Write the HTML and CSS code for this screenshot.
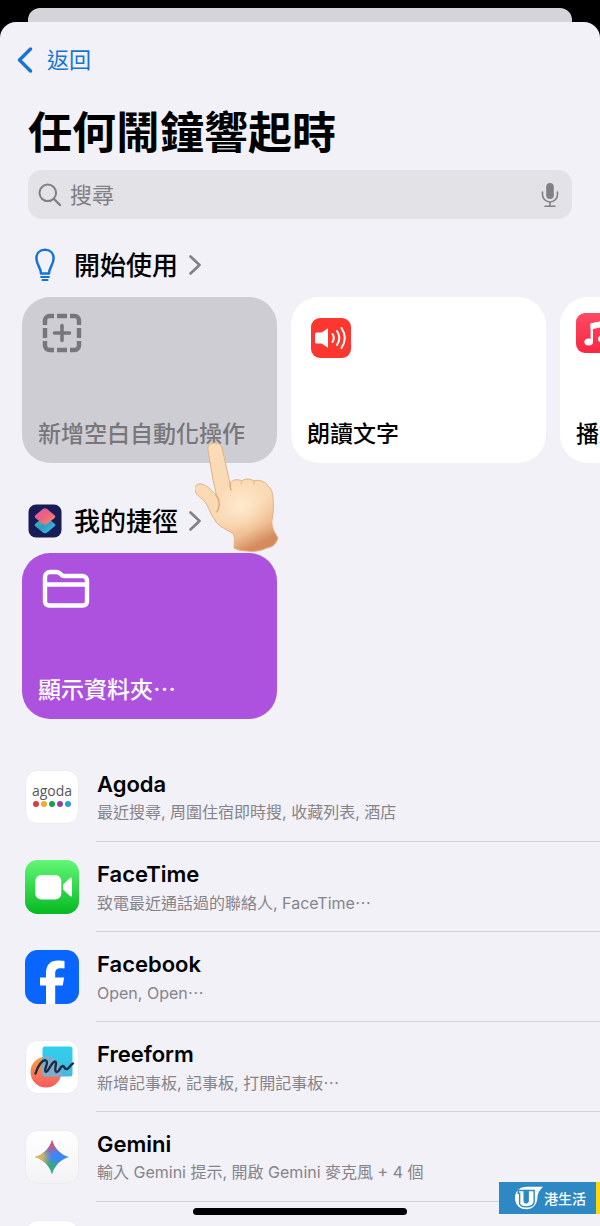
FILE: index.html
```html
<!DOCTYPE html>
<html lang="zh-Hant">
<head>
<meta charset="utf-8">
<meta name="viewport" content="width=device-width, initial-scale=1">
<title>任何鬧鐘響起時</title>
<link rel="stylesheet" href="styles.css">
</head>
<body>
<div class="screen">
  <div class="sheet-behind"></div>
  <main class="sheet">
    <nav class="nav">
      <a class="back" href="#">
        <svg class="back-icon" viewBox="0 0 16 26" aria-hidden="true"><path d="M13.500 2 2.500 13l11 11" fill="none" stroke="currentColor" stroke-width="3.400" stroke-linecap="round" stroke-linejoin="round"/></svg>
        <span class="back-label">返回</span>
      </a>
    </nav>
    <h1 class="title">任何鬧鐘響起時</h1>
    <form class="search">
      <svg class="search-icon" viewBox="0 0 24 24" aria-hidden="true"><circle cx="9.800" cy="9.800" r="8.300" fill="none" stroke="currentColor" stroke-width="2"/><path d="m16 16 6 6" stroke="currentColor" stroke-width="2.400" stroke-linecap="round"/></svg>
      <input class="search-input" type="search" placeholder="搜尋" aria-label="搜尋">
      <button class="mic" type="button" aria-label="語音輸入">
        <svg class="mic-icon" viewBox="0 0 18 26" aria-hidden="true"><rect x="5.200" y="1" width="7.600" height="16" rx="3.800" fill="currentColor"/><path d="M1.500 10v2.500a7.500 7.500 0 0 0 15 0V10M9 20v4M4 24.300h10" fill="none" stroke="currentColor" stroke-width="1.600" stroke-linecap="round"/></svg>
      </button>
    </form>

    <section class="section">
      <h2 class="section-head">
        <svg class="section-icon" viewBox="0 0 34 34" aria-hidden="true"><g fill="none" stroke="#1573d6" stroke-width="2.500" stroke-linecap="round" stroke-linejoin="round"><path d="M13 25.500c0-6-4.600-8.500-4.600-15.200 0-5.200 3.600-8.500 8.600-8.500s8.600 3.300 8.600 8.500c0 6.700-4.600 9.200-4.600 15.200z"/><path d="M13 29h8" stroke-width="1.800"/><path d="M14.500 32h5" stroke-width="2.200"/></g></svg>
        <a class="section-link" href="#"><span class="section-label">開始使用</span>
          <svg class="chevron" viewBox="0 0 12 20" aria-hidden="true"><path d="m1.500 1.500 9 8.500-9 8.500" fill="none" stroke="currentColor" stroke-width="2.600" stroke-linecap="round" stroke-linejoin="round"/></svg>
        </a>
      </h2>
      <div class="cards">
        <button class="card card-pressed" type="button">
          <svg class="glyph" viewBox="0 0 48 40" aria-hidden="true"><g fill="none" stroke="currentColor"><path stroke-width="4.400" d="M3 12V7.500A4.500 4.500 0 0 1 7.500 3H12M15 3h10M28 3h4.500A4.500 4.500 0 0 1 37 7.500V12M37 15v10M37 28v4.500A4.500 4.500 0 0 1 32.500 37H28M25 37H15M12 37H7.500A4.500 4.500 0 0 1 3 32.500V28M3 25V15"/><path stroke-width="3.600" stroke-linecap="round" d="M20 12.500v15M12.500 20h15"/></g></svg>
          <span>新增空白自動化操作</span>
        </button>
        <button class="card" type="button">
          <svg class="tile" viewBox="0 0 40 40" aria-hidden="true"><rect width="40" height="40" rx="9" fill="#fc372f"/><path d="M5.500 14.500h5L17 10.300v19.500L10.500 25.500h-5a1.500 1.500 0 0 1-1.500-1.500v-8a1.500 1.500 0 0 1 1.500-1.500z" fill="#fff"/><g fill="none" stroke="#fff" stroke-width="2" stroke-linecap="round"><path d="M21.500 16q2.600 4 0 8M26 13q4.600 7 0 14M30.500 10q6.600 10 0 20"/></g></svg>
          <span>朗讀文字</span>
        </button>
        <button class="card" type="button">
          <svg class="tile tile-music" viewBox="0 0 40 40" aria-hidden="true"><defs><linearGradient id="music" x2="0" y2="1"><stop stop-color="#fb4b62"/><stop offset="1" stop-color="#fa2743"/></linearGradient></defs><rect width="40" height="40" rx="9" fill="url(#music)"/><path d="M14.600 10.500 30.700 7v6L14.600 16.500z" fill="#fff"/><path d="M15.800 28V11.500L29.500 8.600v16" fill="none" stroke="#fff" stroke-width="2.400"/><ellipse cx="12.700" cy="29" rx="4.300" ry="3.600" fill="#fff"/><ellipse cx="26.300" cy="26" rx="4.300" ry="3.600" fill="#fff"/></svg>
          <span>播放音樂</span>
        </button>
      </div>
      <svg class="hand" viewBox="0 0 84 112" aria-hidden="true">
        <defs>
          <linearGradient id="skin" x1=".2" y1="0" x2=".6" y2="1"><stop stop-color="#fbdcb6"/><stop offset=".65" stop-color="#fad9b5"/><stop offset=".86" stop-color="#f0bf95"/><stop offset="1" stop-color="#d48c5e"/></linearGradient>
          <radialGradient id="palm" cx=".45" cy=".45" r=".55"><stop stop-color="#ffebd0"/><stop offset="1" stop-color="#ffe3c2" stop-opacity="0"/></radialGradient>
        </defs>
        <path d="M13 8C12 3 16 1 20 1c4 0 6 2 7 5L35 41C38 37 43 37 47 39C50 36 56 37 59 39C64 37 71 40 73 44C77 47 78 52 78 58C79 66 78 73 77 78C76 85 80 91 83 96C81 102 78 105 72 106C66 109 58 110 52 109C47 109 42 108 39 106C39 102 40 97 39 93C36 89 27 87 22 81C17 75 15 69 12 63C8 56 3 55 1 51C-1 47-1 43 4 42C10 41 15 47 21 53C21 48 19 43 18 38z" fill="url(#skin)" stroke="#e4b184" stroke-width="1"/>
        <ellipse cx="49" cy="66" rx="26" ry="26" fill="url(#palm)"/>
        <path d="M21 53c4 5 4 11 1 17M35 41c0 3 0 5 1 7" fill="none" stroke="#dda779" stroke-width="1.400" stroke-linecap="round"/>
        <path d="M47 39c-1 1-1 2-1 3M59 39v3" fill="none" stroke="#e4b58a" stroke-linecap="round"/>
      </svg>
    </section>

    <section class="section section-second">
      <h2 class="section-head">
        <svg class="section-icon" viewBox="0 0 34 34" aria-hidden="true"><defs><linearGradient id="scA" x2="1" y2="1"><stop stop-color="#dd59d1"/><stop offset=".45" stop-color="#ed6079"/><stop offset="1" stop-color="#ed9279"/></linearGradient><linearGradient id="scB" x2="1" y2="1"><stop stop-color="#35c4a1"/><stop offset=".5" stop-color="#2d9bc4"/><stop offset="1" stop-color="#42c6f1"/></linearGradient></defs><rect x=".5" y=".5" width="33" height="33" rx="7.500" fill="#181c56"/><path d="m14.900 13.500-7.200 5.900q-2 1.600 0 3.200l7.200 5.900q2.100 1.300 4.200 0l7.200-5.900q2-1.600 0-3.200l-7.200-5.900z" fill="url(#scB)"/><path d="m14.900 5-7.200 6q-2 1.600 0 3.200l7.200 5.900q2.100 1.300 4.200 0l7.200-5.900q2-1.600 0-3.200l-7.200-6q-2.100-1.300-4.200 0z" fill="url(#scA)"/></svg>
        <a class="section-link" href="#"><span class="section-label">我的捷徑</span>
          <svg class="chevron" viewBox="0 0 12 20" aria-hidden="true"><path d="m1.500 1.500 9 8.500-9 8.500" fill="none" stroke="currentColor" stroke-width="2.600" stroke-linecap="round" stroke-linejoin="round"/></svg>
        </a>
      </h2>
      <div class="cards">
        <button class="card card-purple" type="button">
          <svg class="glyph" viewBox="0 0 48 40" aria-hidden="true"><path d="M3 8a5 5 0 0 1 5-5h6.500q2 0 3.500 1.500l1.800 1.600Q21.200 7 23 7h17.500a4.500 4.500 0 0 1 4.500 4.500v21a4 4 0 0 1-4 4H7a4 4 0 0 1-4-4zM3 15.500h42" fill="none" stroke="currentColor" stroke-width="4.400"/></svg>
          <span>顯示資料夾<span class="dots">…</span></span>
        </button>
      </div>
    </section>

    <ul class="apps">
      <li class="app">
        <svg class="app-icon" viewBox="0 0 54 54" aria-hidden="true"><rect x=".5" y=".5" width="53" height="53" rx="12" fill="#fff" stroke="#ececf0"/><text x="27" y="26" class="agoda-word">agoda</text><circle cx="11" cy="34" r="3" fill="#d93b41"/><circle cx="19" cy="34" r="3" fill="#f3ad24"/><circle cx="27" cy="34" r="3" fill="#16a04e"/><circle cx="35" cy="34" r="3" fill="#964596"/><circle cx="43" cy="34" r="3" fill="#26a2ce"/></svg>
        <div class="app-text"><h3>Agoda</h3><p>最近搜尋, 周圍住宿即時搜, 收藏列表, 酒店</p></div>
      </li>
      <li class="app">
        <svg class="app-icon" viewBox="0 0 54 54" aria-hidden="true"><defs><linearGradient id="ft" x2="0" y2="1"><stop stop-color="#62f778"/><stop offset="1" stop-color="#06b921"/></linearGradient></defs><rect width="54" height="54" rx="12.500" fill="url(#ft)"/><rect x="10.300" y="15" width="26" height="24.500" rx="6" fill="#fff"/><path d="M38 24.500 45 18q2-1.500 2 .8v16.400q0 2.300-2 .8l-7-6.500z" fill="#fff"/></svg>
        <div class="app-text"><h3>FaceTime</h3><p>致電最近通話過的聯絡人, FaceTime<span class="dots">…</span></p></div>
      </li>
      <li class="app">
        <svg class="app-icon" viewBox="0 0 54 54" aria-hidden="true"><rect width="54" height="54" rx="12.500" fill="#0866fe"/><path d="M21 54V35.500h-6v-8h6v-3.800C21 14.500 25.200 10.500 33 10.500c2.700 0 5 .2 6.500.6V18.500c-1-.1-2.300-.2-3.700-.2-4 0-5.600 1.500-5.600 5.400v3.800h9l-1.500 8h-7.500V54z" fill="#fff"/></svg>
        <div class="app-text"><h3>Facebook</h3><p>Open, Open<span class="dots">…</span></p></div>
      </li>
      <li class="app">
        <svg class="app-icon" viewBox="0 0 54 54" aria-hidden="true"><defs><linearGradient id="ffA" x2="0" y2="1"><stop stop-color="#f7a044"/><stop offset="1" stop-color="#fb5a60"/></linearGradient><linearGradient id="ffB" x2="0" y2="1"><stop stop-color="#2ed1ed"/><stop offset="1" stop-color="#46b9e2"/></linearGradient><clipPath id="ffC"><circle cx="21" cy="32" r="15.500"/></clipPath></defs><rect x=".5" y=".5" width="53" height="53" rx="12" fill="#fff" stroke="#ececf0"/><circle cx="21" cy="32" r="15.500" fill="url(#ffA)"/><rect x="17.500" y="6.500" width="30" height="30" rx="2.500" fill="url(#ffB)"/><rect x="17.500" y="6.500" width="30" height="30" rx="2.500" fill="#84aacb" clip-path="url(#ffC)"/><path d="M10.500 33.500C13 25 18 19 21 20.500c3.500 1.500-2.500 9-.5 11 2.500 2 6-10 9.500-10 3 0-2 9.500 1.500 10.500 3 .5 3.500-6 6.500-6 2 0 1 4 4 3 2.500-.8 3-4 6-5.500" fill="none" stroke="#172f47" stroke-width="2.400" stroke-linecap="round" stroke-linejoin="round"/></svg>
        <div class="app-text"><h3>Freeform</h3><p>新增記事板, 記事板, 打開記事板<span class="dots">…</span></p></div>
      </li>
      <li class="app">
        <svg class="app-icon" viewBox="0 0 54 54" aria-hidden="true"><defs><linearGradient id="gmBg" x2="0" y2="1"><stop stop-color="#fff"/><stop offset="1" stop-color="#f3f3f5"/></linearGradient><radialGradient id="gmR" cx=".46" cy="0" r=".46"><stop stop-color="#f04450"/><stop offset=".4" stop-color="#e0506a" stop-opacity=".9"/><stop offset="1" stop-color="#b060a0" stop-opacity="0"/></radialGradient><radialGradient id="gmY" cx="0" cy=".5" r=".5"><stop stop-color="#fac02e"/><stop offset=".5" stop-color="#e5b84a" stop-opacity=".85"/><stop offset="1" stop-color="#9db070" stop-opacity="0"/></radialGradient><radialGradient id="gmG" cx=".4" cy="1" r=".52"><stop stop-color="#2eb457"/><stop offset=".5" stop-color="#37ad6e" stop-opacity=".9"/><stop offset="1" stop-color="#3c9ca0" stop-opacity="0"/></radialGradient><path id="gmS" d="M27 10c2 8 9 15 17 17-8 2-15 9-17 17-2-8-9-15-17-17 8-2 15-9 17-17z"/></defs><rect x=".5" y=".5" width="53" height="53" rx="12" fill="url(#gmBg)" stroke="#ececf0"/><use href="#gmS" fill="#3f86f5"/><use href="#gmS" fill="url(#gmG)"/><use href="#gmS" fill="url(#gmY)"/><use href="#gmS" fill="url(#gmR)"/></svg>
        <div class="app-text"><h3>Gemini</h3><p>輸入 Gemini 提示, 開啟 Gemini 麥克風 + 4 個</p></div>
      </li>
      <li class="app">
        <svg class="app-icon" viewBox="0 0 54 54" aria-hidden="true"><rect x=".5" y=".5" width="53" height="53" rx="12" fill="#fff" stroke="#ececf0"/></svg>
        <div class="app-text"><h3>Google</h3></div>
      </li>
    </ul>
  </main>
  <div class="home-indicator"></div>
  <div class="watermark">
    <svg class="watermark-logo" viewBox="0 0 32 26" aria-hidden="true"><path d="M31 1H14C6 1 1 6 1 13s5 12 12 12 11.500-5 12-12c0-5 2-8 6-12z" fill="#fff"/><path d="M4.500 5H11v11q0 2 2 2t2-2V5h6.500v11.500q0 6-8.300 6T6 16.500V8H4.500z" fill="#fff" stroke="#2e88c4" stroke-width="1.500"/><path d="M10.500 4.300h5V16q0 2.500-2.500 2.500T10.500 16z" fill="#2e88c4"/></svg>
    港生活
  </div>
</div>
</body>
</html>
```

FILE: styles.css
```css
* {
  box-sizing: border-box;
}

body {
  margin: 0;
  background: #000;
  color: #000;
  font-family: Inter, "Noto Sans CJK TC", sans-serif;
}

button,
input {
  font: inherit;
}

a {
  color: inherit;
  text-decoration: none;
}

h1,
h2,
h3,
p,
ul {
  margin: 0;
  padding: 0;
}

.screen {
  position: relative;
  display: flex;
  flex-direction: column;
  height: 100vh;
  padding-top: 8px;
  overflow: hidden;
}

.sheet-behind {
  flex: none;
  height: 14px;
  margin: 0 28px;
  border-radius: 12px 12px 0 0;
  background: #d4d4d9;
}

.sheet {
  flex: 1;
  min-height: 0;
  overflow: hidden;
  border-radius: 16px 16px 0 0;
  background: #f2f1f7;
}

.nav {
  display: flex;
  align-items: center;
  height: 76px;
  padding: 0 17px;
}

.back {
  display: flex;
  align-items: center;
  gap: 14px;
  color: #1573d6;
  font-size: 22px;
}

.back-label,
.section-label {
  padding-bottom: 4px;
}

.back-icon {
  width: 16px;
  height: 26px;
}

.title {
  padding: 2px 28px 4px;
  font-size: 44px;
  font-weight: 700;
  line-height: 66px;
}

.search {
  display: flex;
  align-items: center;
  gap: 8px;
  height: 49px;
  margin: 0 28px;
  padding: 0 12px 0 10px;
  border-radius: 14px;
  background: #e3e2e7;
  color: #808085;
}

.search-icon {
  flex: none;
  width: 24px;
  height: 24px;
}

.search-input {
  flex: 1;
  min-width: 0;
  padding: 0;
  border: 0;
  outline: 0;
  background: none;
  font-size: 22px;
}

.search-input::placeholder {
  color: #808085;
}

.mic {
  display: flex;
  padding: 0;
  border: 0;
  background: none;
  color: inherit;
}

.mic-icon {
  width: 20px;
  height: 26px;
}

.section {
  position: relative;
  margin-top: 14px;
}

.section-second {
  margin-top: 26px;
}

.section-head {
  display: flex;
  align-items: center;
  gap: 12px;
  height: 64px;
  padding: 0 28px;
  font-size: 26px;
  font-weight: 500;
}

.section-icon {
  width: 34px;
  height: 34px;
}

.section-link {
  display: flex;
  align-items: center;
  gap: 11px;
}

.chevron {
  width: 12px;
  height: 20px;
  color: #808085;
}

.cards {
  display: grid;
  grid-auto-columns: 255px;
  grid-auto-flow: column;
  gap: 14px;
  padding: 0 22px;
  overflow: hidden;
}

.card {
  display: flex;
  flex-direction: column;
  align-items: flex-start;
  justify-content: space-between;
  height: 166px;
  padding: 16px 16px 12px;
  border: 0;
  border-radius: 28px;
  background: #fff;
  color: #000;
  font-size: 23px;
  font-weight: 500;
  line-height: 34px;
  text-align: left;
  white-space: nowrap;
}

.card-pressed {
  background: #cecdd3;
  color: #77777b;
}

.card-purple {
  background: #ad52de;
  color: #fff;
}

.glyph {
  width: 48px;
  height: 40px;
  margin-left: 4px;
}

.tile {
  width: 40px;
  height: 40px;
  margin: 5px 0 0 4px;
}

.tile-music {
  margin: 0;
}

.dots {
  font-family: "Noto Sans CJK TC", sans-serif;
}

/* Pointing hand laid over the first card */
.hand {
  position: absolute;
  top: 209px;
  left: 195px;
  z-index: 1;
  width: 84px;
  height: 112px;
}

.apps {
  margin-top: 33px;
  list-style: none;
}

.app {
  display: flex;
  gap: 17px;
  height: 90px;
  padding-left: 25px;
}

.app-icon {
  flex: none;
  width: 54px;
  height: 54px;
  margin-top: 18px;
}

.agoda-word {
  fill: #55565a;
  font-family: "Open Sans", sans-serif;
  font-size: 14px;
  text-anchor: middle;
}

.app-text {
  flex: 1;
  padding: 17px 0 0 1px;
  border-bottom: 1px solid #d3d2d8;
}

.app-text h3 {
  font-size: 22px;
  font-weight: 600;
  line-height: 30px;
}

.app-text p {
  color: #85848a;
  font-size: 16px;
  line-height: 27px;
}

.home-indicator {
  position: absolute;
  bottom: 11px;
  left: 50%;
  width: 214px;
  height: 7px;
  margin-left: -107px;
  border-radius: 4px;
  background: #000;
}

.watermark {
  position: absolute;
  right: 0;
  bottom: 12px;
  display: flex;
  align-items: center;
  width: 101px;
  height: 32px;
  padding-left: 15px;
  border-right: 4px solid #f9d80f;
  background: #2e88c4;
  color: #fff;
  font-size: 14px;
  font-weight: 500;
  white-space: nowrap;
}

.watermark-logo {
  flex: none;
  width: 30px;
  height: 26px;
}
```
